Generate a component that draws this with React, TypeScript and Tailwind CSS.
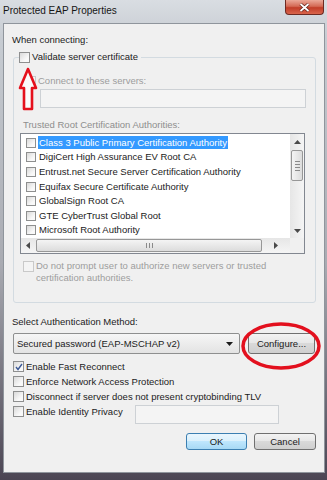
import React from 'react'

type BoxProps = { checked?: boolean; disabled?: boolean; small?: boolean }

function Box({ checked, disabled, small }: BoxProps) {
  const size = small ? 'w-[10px] h-[10px]' : 'w-[11px] h-[11px]'
  const look = disabled
    ? 'border-[#c9c9c9] bg-[#f4f4f4]'
    : 'border-[#8e8f8f] bg-[linear-gradient(135deg,#d9d9d9,#f9f9f9_70%)]'
  return (
    <span className={`shrink-0 flex items-center justify-center border ${size} ${look}`}>
      {checked && (
        <svg width="8" height="8" viewBox="0 0 8 8">
          <path d="M1 4 L3 6.5 L7 1" fill="none" stroke="#3d5a96" strokeWidth="1.4" />
        </svg>
      )}
    </span>
  )
}

const certs = [
  'Class 3 Public Primary Certification Authority',
  'DigiCert High Assurance EV Root CA',
  'Entrust.net Secure Server Certification Authority',
  'Equifax Secure Certificate Authority',
  'GlobalSign Root CA',
  'GTE CyberTrust Global Root',
  'Microsoft Root Authority',
]

function Tri({ dir }: { dir: 'up' | 'down' | 'left' | 'right' }) {
  const pts = {
    up: '0,4 3.5,0 7,4',
    down: '0,0 7,0 3.5,4',
    left: '4,0 4,7 0,3.5',
    right: '0,0 0,7 4,3.5',
  }[dir]
  const w = dir === 'up' || dir === 'down' ? 7 : 4
  const h = dir === 'up' || dir === 'down' ? 4 : 7
  return (
    <svg width={w} height={h} viewBox={`0 0 ${w} ${h}`}>
      <polygon points={pts} fill="#4a4a4a" />
    </svg>
  )
}

export default function App() {
  return (
    <div className="relative w-[327px] h-[480px] overflow-hidden flex flex-col bg-[linear-gradient(180deg,#d9dde2_0%,#c7ccd2_8%,#a9abb2_55%,#4b4553_100%)] font-['Liberation_Sans',Arial,sans-serif] text-[9.5px] leading-[12px] text-[#1b1b1b]">
      {/* Title bar */}
      <div className="h-[23px] shrink-0 flex items-start">
        <span className="ml-[3px] mt-[5px] text-[10px] text-[#151515]">Protected EAP Properties</span>
        <div className="ml-auto mr-[3px] w-[39px] h-[15px] flex items-center justify-center rounded-b-[4px] border border-t-0 border-[#6e2a22] bg-[linear-gradient(180deg,#eba898,#d46a55_45%,#c13d28_55%,#d9654c)]">
          <svg width="11" height="9" viewBox="0 0 11 9">
            <path d="M1.5 1 L9.5 8 M9.5 1 L1.5 8" stroke="#5a2018" strokeWidth="3.2" />
            <path d="M1.5 1 L9.5 8 M9.5 1 L1.5 8" stroke="#ffffff" strokeWidth="1.8" />
          </svg>
        </div>
      </div>

      {/* Client area */}
      <div className="ml-[3px] mr-[2px] h-[450px] shrink-0 border border-[#8f959c] bg-[#f0f0f0] pl-[9px] pr-[8px] flex flex-col">
        <div className="mt-[10px] h-[12px] -ml-px">When connecting:</div>

        {/* Group box */}
        <div className="mt-[11px] h-[246px] border border-[#d3dbe1] rounded-[3px] flex flex-col">
          <div className="-mt-[7px] ml-[5px] w-fit h-[12px] flex items-center gap-[2px] bg-[#f0f0f0] pr-[3px]">
            <Box />
            <span>Validate server certificate</span>
          </div>

          <div className="mt-[12px] ml-[11px] h-[12px] flex items-center gap-[2px] text-[#9d9d9d]">
            <Box disabled />
            <span>Connect to these servers:</span>
          </div>
          <div className="mt-[2px] ml-[26px] w-[266px] h-[19px] border border-[#cdd1d5] bg-[#f4f4f4]" />

          <div className="mt-[11px] ml-[9px] h-[12px] text-[#8e8e8e]">Trusted Root Certification Authorities:</div>

          {/* List box */}
          <div className="mt-[2px] ml-[6px] w-[285px] h-[121px] border border-[#828790] bg-white flex flex-col">
            <div className="h-[104px] flex">
              <div className="flex-1 overflow-hidden pt-[1.5px]">
                {certs.map((c, i) => (
                  <div key={c} className="h-[14.6px] flex items-center pl-[5px]">
                    <Box small />
                    <span
                      className={`ml-[2px] px-[1px] h-[13px] flex items-center whitespace-nowrap ${
                        i === 0 ? 'bg-[#3399ff] text-white' : ''
                      }`}
                    >
                      {c}
                    </span>
                  </div>
                ))}
              </div>
              {/* vertical scrollbar */}
              <div className="w-[14px] flex flex-col items-center bg-[linear-gradient(90deg,#e6e6e6,#f5f5f5)]">
                <div className="h-[15px] flex items-center justify-center">
                  <Tri dir="up" />
                </div>
                <div className="mt-[1px] w-[12px] h-[31px] rounded-[2px] border border-[#979797] bg-[linear-gradient(90deg,#f4f4f4,#dcdcdc)] flex flex-col items-center justify-center gap-[2px]">
                  <span className="w-[5px] h-px bg-[#8a8a8a]" />
                  <span className="w-[5px] h-px bg-[#8a8a8a]" />
                  <span className="w-[5px] h-px bg-[#8a8a8a]" />
                  <span className="w-[5px] h-px bg-[#8a8a8a]" />
                </div>
                <div className="mt-auto h-[15px] flex items-center justify-center">
                  <Tri dir="down" />
                </div>
              </div>
            </div>
            {/* horizontal scrollbar */}
            <div className="h-[15px] flex">
              <div className="flex-1 flex items-center bg-[linear-gradient(180deg,#e6e6e6,#f5f5f5)]">
                <div className="w-[14px] flex justify-center">
                  <Tri dir="left" />
                </div>
                <div className="w-[226px] h-[13px] ml-[1px] rounded-[2px] border border-[#979797] bg-[linear-gradient(180deg,#f4f4f4,#dcdcdc)] flex items-center justify-center gap-[2px]">
                  <span className="w-px h-[5px] bg-[#8a8a8a]" />
                  <span className="w-px h-[5px] bg-[#8a8a8a]" />
                  <span className="w-px h-[5px] bg-[#8a8a8a]" />
                </div>
                <div className="flex-1 flex justify-center">
                  <Tri dir="right" />
                </div>
              </div>
              <div className="w-[14px] bg-[#f0f0f0]" />
            </div>
          </div>

          <div className="mt-[7px] ml-[9px] flex items-start gap-[2px] text-[#9d9d9d]">
            <Box disabled />
            <span className="-mt-[1px] leading-[11.5px]">
              Do not prompt user to authorize new servers or trusted
              <br />
              certification authorities.
            </span>
          </div>
        </div>

        <div className="mt-[13px] h-[12px] -ml-px">Select Authentication Method:</div>

        <div className="mt-[5px] h-[21px] flex gap-[8px]">
          <div className="w-[227px] flex items-center justify-between pl-[3px] pr-[6px] border border-[#8e8f8f] rounded-[2px] bg-[linear-gradient(180deg,#f6f6f6,#e3e3e3)]">
            <span>Secured password (EAP-MSCHAP v2)</span>
            <svg width="7" height="4" viewBox="0 0 7 4">
              <polygon points="0,0 7,0 3.5,4" fill="#1b1b1b" />
            </svg>
          </div>
          <div className="w-[67px] flex items-center justify-center border border-[#707070] rounded-[3px] bg-[linear-gradient(180deg,#f3f3f3,#e6e6e6_50%,#d9d9d9_50%,#cfcfcf)]">
            Configure...
          </div>
        </div>

        <div className="mt-[5px] flex flex-col">
          <div className="h-[15px] flex items-center gap-[2px]">
            <Box checked />
            <span>Enable Fast Reconnect</span>
          </div>
          <div className="h-[15px] flex items-center gap-[2px]">
            <Box />
            <span>Enforce Network Access Protection</span>
          </div>
          <div className="h-[15px] flex items-center gap-[2px]">
            <Box />
            <span>Disconnect if server does not present cryptobinding TLV</span>
          </div>
          <div className="flex items-start">
            <div className="w-[122px] h-[15px] flex items-center gap-[2px]">
              <Box />
              <span>Enable Identity Privacy</span>
            </div>
            <div className="mt-[1px] w-[144px] h-[19px] border border-[#cdd1d5] bg-[#f4f4f4]" />
          </div>
        </div>

        <div className="mt-[9px] h-[17px] flex justify-end gap-[7px]">
          <div className="w-[61px] flex items-center justify-center border border-[#3c7fb1] rounded-[3px] bg-[linear-gradient(180deg,#eaf6fd,#d9f0fc_50%,#bee6fd_50%,#a7d9f5)]">
            OK
          </div>
          <div className="w-[62px] flex items-center justify-center border border-[#707070] rounded-[3px] bg-[linear-gradient(180deg,#f3f3f3,#e6e6e6_50%,#d9d9d9_50%,#cfcfcf)]">
            Cancel
          </div>
        </div>
      </div>

      {/* Red annotations drawn over the dialog */}
      <svg className="absolute left-[17px] top-[66px]" width="22" height="46" viewBox="0 0 22 46">
        <polygon
          points="11,3 3,22 7,22 7,43 15,43 15,22 19,22"
          fill="#fbfbfb"
          stroke="#e5101c"
          strokeWidth="2.6"
          strokeLinejoin="round"
        />
      </svg>
      <svg className="absolute left-[240px] top-[321px]" width="84" height="52" viewBox="0 0 84 52">
        <ellipse cx="41" cy="25" rx="38" ry="22" fill="none" stroke="#e3101e" strokeWidth="3.5" />
      </svg>
    </div>
  )
}
